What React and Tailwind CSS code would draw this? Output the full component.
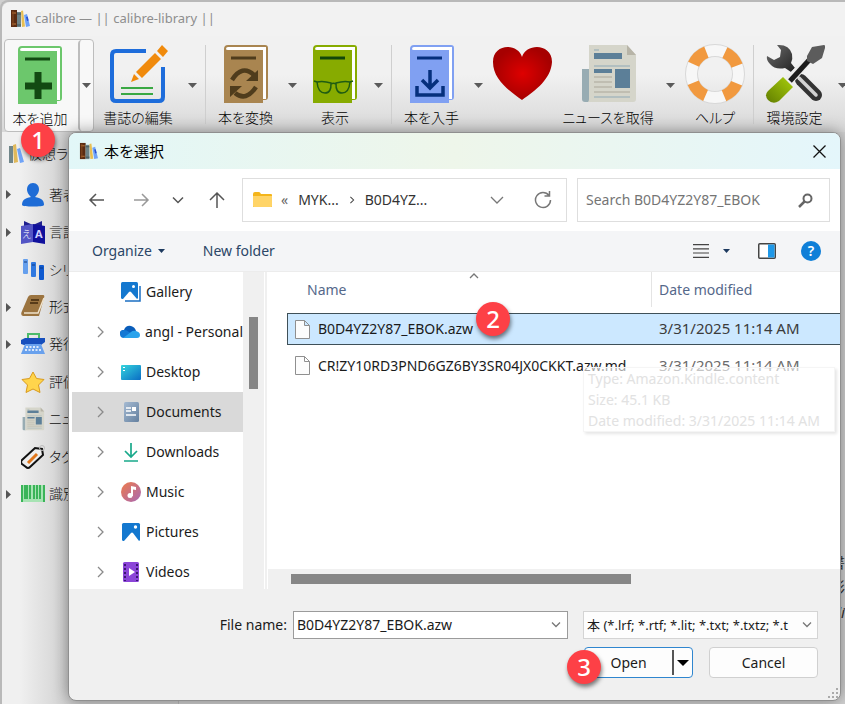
import React from 'react';

const BooksIcon = ({ className }) => (
    <svg viewBox="0 0 20 20" className={className}>
        <rect x="1" y="1" width="6" height="17" fill="#5b2c12" />
        <path d="M2 4h4M2 15h4" stroke="#c07a3a" strokeWidth="1" />
        <path d="M3 2v15" stroke="#8a4c22" strokeWidth="1" />
        <rect x="7" y="3" width="4" height="15" fill="#6d8387" />
        <path d="M7 5h4M7 16h4" stroke="#3f5357" strokeWidth="1" />
        <path d="M11 2l2-.5 2 16-3 .5z" fill="#e8bf52" />
        <path d="M14 6l3-1 3 12-4 1z" fill="#6fa3f7" />
        <path d="M16 8l1.600-.4 1 4-1.600.4z" fill="#2a4fd0" />
    </svg>
);

const Book = ({ color, dark, children }) => (
    <svg viewBox="0 0 60 60" className="size-[60px]">
        <path d="M8 5q0-4 4-4h37q3 0 3 3v49q0 3-3 3h-2v3H8z" fill={color} />
        <path d="M10 5q0-2 2-2h38v52h-3V6H12q-2 0-2-1z" fill="#fff" />
        <path d="M15 14h25" stroke={dark} strokeWidth="3" />
        {children}
    </svg>
);

const AddBook = () => (
    <Book color="#6cc76c" dark="#124a12">
        <path d="M28 27v27M15 41h27" stroke="#124a12" strokeWidth="7" strokeLinejoin="round" />
    </Book>
);

const EditIcon = () => (
    <svg viewBox="0 0 60 60" className="size-[60px]" fill="none">
        <path d="M38 7H8q-4 0-4 4v42q0 4 4 4h43q4 0 4-4V23" stroke="#1e6ddb" strokeWidth="4" />
        <path d="M13 44h32M13 50h32" stroke="#39a843" strokeWidth="2" />
        <path d="M23 38l3-8 5 5zM28 28L47 9l6 6-19 19zM49 7l5-6 6 6-5 6z" fill="#f08a0c" />
    </svg>
);

const ConvertIcon = () => (
    <Book color="#a98550" dark="#4f3c1c">
        <path d="M16 36q10-16 22-5M40 43q-10 15-21 6" stroke="#4f3c1c" strokeWidth="4.500" fill="none" />
        <path d="M42 26v11H30zM14 53V42h12z" fill="#4f3c1c" />
    </Book>
);

const ViewIcon = () => (
    <Book color="#87ab00" dark="#12460a">
        <path d="M12 38q6-1.500 14 1 .5 10-6 10-7 0-8-11zM31 39q8-2.500 14-1-1 11-8 11-6.500 0-6-10zM26 40q2.500-1.500 5 0M9 37l3 1M48 37l-3 1" stroke="#1f5c12" strokeWidth="1.500" fill="none" />
    </Book>
);

const FetchIcon = () => (
    <Book color="#80a0f2" dark="#052f7d">
        <path d="M28 26v17M20 36l8 8 8-8M15 42v9h26v-9" stroke="#052f7d" strokeWidth="3.500" fill="none" />
    </Book>
);

const HeartIcon = () => (
    <svg viewBox="0 0 60 60" className="size-[60px]">
        <defs>
            <radialGradient id="heart">
                <stop offset="0" stopColor="#de0000" />
                <stop offset="1" stopColor="#a60000" />
            </radialGradient>
        </defs>
        <path d="M30 56C16 46 1 35 1 18 1-1 26-1 30 13 34-1 60-1 60 18 59 35 44 46 30 56z" fill="url(#heart)" />
    </svg>
);

const NewsIcon = ({ className }) => (
    <svg viewBox="0 0 60 60" className={className}>
        <path d="M4 25h7v33H7q-3 0-3-3z" fill="#98acb3" />
        <path d="M11 1h38l9 10v44q0 3-3 3H10q1-1 1-3z" fill="#d5d5ca" />
        <path d="M49 1l9 10h-9z" fill="#b7b4a7" />
        <path d="M16 9h28v6H16zM16 25h18v4H16zM37 25h15v19H37z" fill="#5c7f98" />
        <path d="M16 6h5M16 22h36M16 53h36" stroke="#8fa9b6" strokeWidth="1" />
        <path d="M16 33h18M16 38h18M16 43h18M16 48h36" stroke="#b9b7aa" strokeWidth="1.500" />
    </svg>
);

const HelpIcon = () => (
    <svg viewBox="0 0 60 60" className="size-[60px]" fill="none">
        <circle cx="30" cy="30" r="23.500" stroke="#d8d8d8" strokeWidth="13" />
        <circle cx="30" cy="30" r="23.500" stroke="#f7f7f7" strokeWidth="11" />
        <circle cx="30" cy="30" r="23.500" stroke="#f1993f" strokeWidth="12" strokeDasharray="18 18.910" strokeDashoffset="-9.460" />
    </svg>
);

const ToolsIcon = () => (
    <svg viewBox="0 0 60 60" className="size-[60px]">
        <defs>
            <linearGradient id="steel" x1="0" y1="0" x2="1" y2="1">
                <stop offset="0" stopColor="#6d6d6d" />
                <stop offset="1" stopColor="#222" />
            </linearGradient>
            <linearGradient id="grip" x1="0" y1="1" x2="1" y2="0">
                <stop offset="0" stopColor="#617d00" />
                <stop offset="1" stopColor="#a9cf0c" />
            </linearGradient>
        </defs>
        <path d="M12 1q12-1 15 9 1 5-1 9l4 5-4 4-6-4q-10 2-15-4-4-4-3-8l7 4 6-3 1-7z" fill="url(#steel)" />
        <path d="M36 36l15 15" stroke="#333" strokeWidth="12" strokeLinecap="round" />
        <path d="M34 34l17 17" stroke="#d2d2d2" strokeWidth="3.500" strokeLinecap="round" />
        <path d="M20 41L45 14" stroke="#ededed" strokeWidth="9" />
        <path d="M25 37L46 14" stroke="#1b1b1b" strokeWidth="5" />
        <path d="M42 12l5-9 12-2q2 1 1 3l-3 10-9 6-6-3z" fill="#5c5c5c" />
        <path d="M18 33l10 10L14 57Q8 61 3 56-1 51 3 47z" fill="url(#grip)" />
    </svg>
);

const DropArrow = ({ className = 'w-5' }) => (
    <button type="button" aria-label="menu" className={`flex shrink-0 items-center justify-center ${className}`}>
        <svg viewBox="0 0 9 5" className="h-[5px] w-[9px]">
            <path d="M0 0h9L4.500 5z" fill="#5a5a5a" />
        </svg>
    </button>
);

const ToolButton = ({ label, width, children }) => (
    <button type="button" className={`flex shrink-0 flex-col items-center pt-[5px] ${width}`}>
        {children}
        <span className="mt-1 h-5 text-sm leading-5 whitespace-nowrap">{label}</span>
    </button>
);

const Separator = () => <div className="mx-[3px] mt-1.5 mb-2 w-px shrink-0 bg-[#cfcfcf]" />;

const Toolbar = () => (
    <nav className="flex h-24 overflow-hidden bg-linear-to-b from-[#f1f1f1] from-40% to-[#d8d8d8] pt-[3px] pl-0.5 font-light text-black [font-feature-settings:'palt']">
        <div className="flex shrink-0 rounded border border-[#bdbdbd] bg-[#f8f8f8]">
            <ToolButton label="本を追加" width="w-[73px] pr-[3px]"><AddBook /></ToolButton>
            <DropArrow className="w-[15px] rounded border-l-2 border-[#bdbdbd]" />
        </div>
        <ToolButton label="書誌の編集" width="w-[88px]"><EditIcon /></ToolButton>
        <DropArrow />
        <Separator />
        <ToolButton label="本を変換" width="w-[73px]"><ConvertIcon /></ToolButton>
        <DropArrow />
        <ToolButton label="表示" width="w-[66px]"><ViewIcon /></ToolButton>
        <DropArrow />
        <Separator />
        <ToolButton label="本を入手" width="w-[73px]"><FetchIcon /></ToolButton>
        <DropArrow />
        <ToolButton label="" width="w-[68px]"><HeartIcon /></ToolButton>
        <ToolButton label="ニュースを取得" width="w-[104px]"><NewsIcon className="size-[60px]" /></ToolButton>
        <DropArrow />
        <ToolButton label="ヘルプ" width="w-[70px]"><HelpIcon /></ToolButton>
        <Separator />
        <ToolButton label="環境設定" width="w-[75px]"><ToolsIcon /></ToolButton>
        <DropArrow />
    </nav>
);

const categories = [
    {
        label: '著者', open: true,
        icon: <path d="M12 0c4 0 6 3 6 6.500S15 13 14 14c6 1 9 3 9 8 0 2-22 2-22 0 0-5 3-7 9-8-1-1-4-4-4-7.500S8 0 12 0z" fill="#1e6cd6" />,
    },
    {
        label: '言語', open: true,
        icon: (
            <>
                <path d="M3 1l9 4 9-4v20l-9-4-9 4z" fill="#20208f" />
                <path d="M0 6l12-2v18L0 24z" fill="#5355c5" />
                <path d="M12 4l12 2v18l-12-2z" fill="#10109c" />
                <text x="1" y="18" fontSize="10" fill="#fff">え</text>
                <text x="14" y="18" fontSize="11" fontWeight="700" fill="#cfd2ff">A</text>
            </>
        ),
    },
    {
        label: 'シリーズ',
        icon: (
            <>
                <rect x="2" y="1" width="5" height="15" rx="1" fill="#659fed" />
                <rect x="10" y="4" width="5" height="15" rx="1" fill="#2f78e0" />
                <rect x="18" y="7" width="5" height="15" rx="1" fill="#0f5ad0" />
                <path d="M3 4h3M11 7h3M19 10h3" stroke="#123a80" strokeWidth="1" />
            </>
        ),
    },
    {
        label: '形式', open: true,
        icon: (
            <>
                <path d="M7 2q1-2 3-2h12q2 0 1 3l-5 18H2q-3-1-1-5z" fill="#9b7440" />
                <path d="M3 18h14l6-15" stroke="#efe2cb" strokeWidth="1.500" fill="none" />
                <path d="M10 5h8M9 8h8" stroke="#41290c" strokeWidth="1.500" />
            </>
        ),
    },
    {
        label: '発行者', open: true,
        icon: (
            <>
                <path d="M7 6V2h11v4" stroke="#4bbb6b" strokeWidth="2" fill="none" />
                <path d="M0 8l4-2h20v4l-4 3H3l-3-1z" fill="#174fbd" />
                <path d="M4 12h16l4 10H0z" fill="#69a1ed" />
                <path d="M5 15h14M4 18h16" stroke="#fff" strokeWidth="1.500" strokeDasharray="2 1.500" />
            </>
        ),
    },
    {
        label: '評価',
        icon: <path d="M12 2l3.500 6.500 7.500 1-5.500 5.500 1.500 7.500-7-3.500-7 3.500L6.500 15 1 9.500l7.500-1z" fill="#ffd54c" stroke="#d99a1c" strokeWidth="1" strokeLinejoin="round" />,
    },
    { label: 'ニュース', news: true },
    {
        label: 'タグ',
        icon: (
            <>
                <path d="M1 15L14 3l7 1 1 6L9 22q-2 2-4 0l-4-3q-2-2 0-4z" fill="#eee" stroke="#111" strokeWidth="2" />
                <path d="M7 18L16 9" stroke="#e0761b" strokeWidth="3" />
                <circle cx="21" cy="3" r="2.500" stroke="#bbb" strokeWidth="1" fill="none" />
            </>
        ),
    },
    {
        label: '識別子', open: true,
        icon: (
            <>
                <path d="M0 3h24v17H0z" fill="#a7e3b3" />
                <path d="M1 3v17M4 3v14M6 3v14M9 3v14M13 3v14M16 3v14M19 3v14M23 3v17" stroke="#17a53b" strokeWidth="1.500" />
            </>
        ),
    },
];

const Sidebar = () => (
    <aside className="w-44 shrink-0 bg-linear-to-r from-[#f0f0f0] from-10% to-[#cecece] to-40% text-sm font-light text-[#101010] [font-feature-settings:'palt']">
        <div className="flex h-11 items-center gap-1 pl-1.5 whitespace-nowrap">
            <svg viewBox="0 0 16 20" className="h-5 w-4">
                <path d="M1 2h4v17H1z" fill="#71868a" />
                <path d="M5 1l3-1 2 18-4 1z" fill="#e0b85a" />
                <path d="M9 5l3-1 4 14-4 1z" fill="#6fa3f7" />
            </svg>
            仮想ライブラリ
        </div>
        <ul className="flex h-[337px] flex-col">
            {categories.map((c) => (
                <li key={c.label} className="flex flex-1 items-center whitespace-nowrap">
                    <span className="flex w-[19px] pl-1">
                        {c.open && (
                            <svg viewBox="0 0 5 9" className="h-[9px] w-[5px]"><path d="M0 0l5 4.500L0 9z" fill="#555" /></svg>
                        )}
                    </span>
                    {c.news ? <NewsIcon className="size-6" /> : <svg viewBox="0 0 24 24" className="size-6">{c.icon}</svg>}
                    <span className="pl-1">{c.label}</span>
                </li>
            ))}
        </ul>
    </aside>
);

const Chevron = ({ d = 'M1 1l6 6 6-6', box = '0 0 14 8', className = 'h-2 w-3.5', color = '#777' }) => (
    <svg viewBox={box} className={className} fill="none" stroke={color} strokeWidth="1.300">
        <path d={d} />
    </svg>
);

const NavArrow = ({ d, label, className, color = '#555' }) => (
    <button type="button" aria-label={label} className={`flex size-5 items-center justify-center ${className}`}>
        <svg viewBox="0 0 16 16" className="size-4 overflow-visible" fill="none" stroke={color} strokeWidth="1.500">
            <path d={d} />
        </svg>
    </button>
);

const AddressBar = () => (
    <div className="flex h-[62px] items-center bg-white pr-2.5 pl-[18px] text-[#333]">
        <NavArrow label="Back" d="M15 8H1M7 2L1 8l6 6" />
        <NavArrow label="Forward" className="ml-6" color="#999" d="M1 8h14M9 2l6 6-6 6" />
        <NavArrow label="Recent" className="ml-[17px]" d="M3 5.500l5 5 5-5" />
        <NavArrow label="Up" className="ml-[19px]" d="M8 16V1M1 8l7-7 7 7" />
        <div className="ml-[15px] flex h-11 min-w-0 flex-1 items-center border border-[#dedede] pl-2.5 text-sm">
            <svg viewBox="0 0 20 16" className="h-4 w-5">
                <path d="M0 2q0-2 2-2h4q1 0 2 2h10q1 0 1 1v12H0z" fill="#f4b51b" />
                <path d="M0 4h19v10q0 1-1 1H1q-1 0-1-1z" fill="#ffd467" />
            </svg>
            <span className="ml-2 text-[#666]">«</span>
            <a href="#" className="ml-2.5">MYK...</a>
            <Chevron box="0 0 6 10" d="M1 1l4 4-4 4" className="mx-2.5 h-2 w-1.5" color="#444" />
            <a href="#">B0D4YZ...</a>
            <button type="button" aria-label="Previous locations" className="mr-[30px] ml-auto"><Chevron /></button>
            <button type="button" aria-label="Refresh" className="mr-3.5">
                <svg viewBox="0 0 18 18" className="size-[18px]" fill="none" stroke="#777" strokeWidth="1.500">
                    <path d="M15 4.500A7.500 7.500 0 1 0 16.500 9M15.500 0v5h-5" />
                </svg>
            </button>
        </div>
        <div className="ml-2.5 flex h-11 w-[253px] items-center border border-[#dedede] pr-4 pl-2">
            <input type="search" aria-label="Search" placeholder="Search B0D4YZ2Y87_EBOK" className="min-w-0 flex-1 text-sm placeholder-[#757575] outline-none" />
            <svg viewBox="0 0 15 15" className="size-[15px]" fill="none" stroke="#666">
                <circle cx="9.500" cy="5.500" r="4" strokeWidth="2" />
                <path d="M6.500 8.500L1 14" strokeWidth="2.500" />
            </svg>
        </div>
    </div>
);

const CommandBar = () => (
    <div className="flex h-[41px] items-center border-b border-[#ececec] bg-[#f4f5f7] pr-[19px] pl-[23px] text-sm text-[#2b4667]">
        <button type="button" className="flex items-center gap-1.5">
            Organize
            <svg viewBox="0 0 7 4" className="h-1 w-[7px]"><path d="M0 0h7L3.500 4z" fill="#1d3a5f" /></svg>
        </button>
        <button type="button" className="ml-[38px]">New folder</button>
        <button type="button" aria-label="Change view" className="ml-auto flex items-center gap-3.5">
            <svg viewBox="0 0 16 14" className="h-3.5 w-4" stroke="#444" strokeWidth="1.200">
                <path d="M0 .6h16M0 4.800h16M0 9h16M0 13.300h16" />
            </svg>
            <svg viewBox="0 0 7 4" className="h-1 w-[7px]"><path d="M0 0h7L3.500 4z" fill="#1d3a5f" /></svg>
        </button>
        <button type="button" aria-label="Preview pane" className="ml-7">
            <svg viewBox="0 0 18 16" className="h-4 w-[18px]">
                <rect x=".75" y=".75" width="16.500" height="14.500" rx="1" fill="#fff" stroke="#444" strokeWidth="1.500" />
                <path d="M10 1.500h6.500v13H10z" fill="#1f98e8" />
            </svg>
        </button>
        <button type="button" aria-label="Help" className="ml-[25px] flex size-5 items-center justify-center rounded-full bg-[#0f7fd8] text-sm font-semibold text-white">?</button>
    </div>
);

const PictureShape = () => (
    <>
        <rect x="1" y="1" width="18" height="18" rx="1.500" fill="#1478cf" />
        <path d="M3 19l7-8q1-1 2 0l6 8z" fill="#fff" />
        <circle cx="14.500" cy="5" r="1.700" fill="#fff" />
    </>
);

const places = [
    {
        name: 'Gallery', root: true,
        icon: (
            <>
                <path d="M19 4v15H4" stroke="#1b6fc2" strokeWidth="1.500" fill="none" />
                <rect x="0" y="0" width="17" height="17" rx="1.500" fill="#1478cf" />
                <path d="M2 17l6-7q1-1 2 0l6 7z" fill="#fff" />
                <circle cx="12.500" cy="4.500" r="1.500" fill="#fff" />
            </>
        ),
    },
    {
        name: 'angl - Personal',
        icon: (
            <>
                <path d="M4 8q2-5 7-4 4 1 5 5l-6 5H4Q0 14 0 11q0-3 4-3z" fill="#0a5dba" />
                <path d="M0 12q0-4 4-4 3 0 5 2l3 2-8 4Q0 16 0 12z" fill="#1478d4" />
                <path d="M3 16l8-6q2-2 5-1 4 1 4 4 0 3-3 3z" fill="#2ba3ec" />
            </>
        ),
    },
    {
        name: 'Desktop',
        icon: (
            <>
                <defs>
                    <linearGradient id="desk" x2="1" y2="1">
                        <stop offset="0" stopColor="#35d5dd" />
                        <stop offset="1" stopColor="#0a6cc4" />
                    </linearGradient>
                </defs>
                <rect x="0" y="3" width="20" height="15" rx="1" fill="url(#desk)" />
                <path d="M2 5h2v1H2zM2 8h2v1H2z" fill="#fff" />
            </>
        ),
    },
    {
        name: 'Documents', selected: true,
        icon: (
            <>
                <defs>
                    <linearGradient id="docs" x2="1" y2="1">
                        <stop offset="0" stopColor="#a5bad2" />
                        <stop offset="1" stopColor="#64809f" />
                    </linearGradient>
                </defs>
                <rect x="3" y="0" width="15" height="20" rx="1.500" fill="url(#docs)" />
                <path d="M5 6h5M5 9h5M5 13h10" stroke="#fff" strokeWidth="1.500" />
                <rect x="11" y="5" width="4" height="4" fill="#fff" />
            </>
        ),
    },
    {
        name: 'Downloads',
        icon: <path d="M10 1v14M4 9l6 6 6-6M3 19h14" stroke="#19a98b" strokeWidth="1.700" fill="none" />,
    },
    {
        name: 'Music',
        icon: (
            <>
                <defs>
                    <linearGradient id="music" x2="1" y2="1">
                        <stop offset="0" stopColor="#ee7b4b" />
                        <stop offset="1" stopColor="#a868b4" />
                    </linearGradient>
                </defs>
                <circle cx="10" cy="10" r="10" fill="url(#music)" />
                <path d="M10 4l5 1v3l-3-.5V14h-2z" fill="#fff" />
                <circle cx="9" cy="13.500" r="2.500" fill="#fff" />
            </>
        ),
    },
    { name: 'Pictures', icon: <PictureShape /> },
    {
        name: 'Videos',
        icon: (
            <>
                <rect x="2" y="0" width="16" height="20" rx="1.500" fill="#8b45d8" />
                <path d="M4 2v17M16 2v17" stroke="#3c1673" strokeWidth="2" strokeDasharray="2 2" />
                <path d="M8 6l6 4-6 4z" fill="#fff" />
            </>
        ),
    },
];

const PlacesTree = () => (
    <ul className="w-[174px] shrink-0 bg-white text-sm text-[#1b1b1b]">
        {places.map((p) => (
            <li key={p.name} className={`ml-[3px] flex h-10 items-center whitespace-nowrap ${p.selected ? 'bg-[#d9d9d9]' : ''}`}>
                <span className="ml-[25px] flex w-6">
                    {!p.root && <Chevron box="0 0 7 12" d="M1 1l5 5-5 5" className="h-3 w-[7px]" color="#8a8a8a" />}
                </span>
                <svg viewBox="0 0 20 20" className="size-5 shrink-0">{p.icon}</svg>
                <a href="#" className="pl-[5px]">{p.name}</a>
            </li>
        ))}
    </ul>
);

const Badge = ({ n, className }) => (
    <span className={`absolute z-20 flex size-[34px] items-center justify-center rounded-full bg-[#fd4046] text-2xl leading-none font-medium text-white shadow-[1px_3px_4px_rgba(0,0,0,0.5)] ${className}`}>
        {n}
    </span>
);

const PageIcon = () => (
    <svg viewBox="0 0 15 19" className="h-[19px] w-[15px] shrink-0">
        <path d="M.5.5h9l5 5v13H.5zM9.500.5v5h5" fill="#fcfcfc" stroke="#8f8f8f" />
    </svg>
);

const FileList = () => (
    <div className="relative flex min-w-0 flex-1 flex-col bg-white">
        <div className="flex-1 pl-[19px]">
            <table className="w-full table-fixed border-separate border-spacing-0 text-left">
                <thead>
                    <tr className="h-[41px] align-top text-sm text-[#55688a]">
                        <th className="relative p-0 font-normal">
                            <div className="flex h-[35px] items-center pl-5">Name</div>
                            <Chevron box="0 0 10 6" d="M1 5l4-4 4 4" className="absolute top-px left-1/2 h-1.5 w-2.5" />
                        </th>
                        <th className="w-[189px] p-0 font-normal">
                            <div className="flex h-[35px] items-center border-l border-[#e4e4e4] pl-[7px]">Date modified</div>
                        </th>
                    </tr>
                </thead>
                <tbody className="text-sm text-[#1b1b1b]">
                    <tr className="h-8 bg-[#cce8ff]">
                        <td className="border-y border-l border-[#3f5058] p-0">
                            <div className="flex items-center pl-[7px]">
                                <PageIcon />
                                <span className="relative pl-2">
                                    B0D4YZ2Y87_EBOK.azw
                                    <Badge n="2" className="-top-[17px] left-full ml-[3px]" />
                                </span>
                            </div>
                        </td>
                        <td className="border-y border-[#3f5058] p-0 pl-2 text-[15px] text-[#3b3b3b]">3/31/2025 11:14 AM</td>
                    </tr>
                    <tr className="h-[41px]">
                        <td className="p-0">
                            <div className="flex items-center pl-2 whitespace-nowrap">
                                <PageIcon />
                                <span className="pl-2">CR!ZY10RD3PND6GZ6BY3SR04JX0CKKT.azw.md</span>
                            </div>
                        </td>
                        <td className="p-0 pl-2 text-[15px] text-[#6b6b6b]">3/31/2025 11:14 AM</td>
                    </tr>
                </tbody>
            </table>
        </div>
        <div className="h-5 bg-[#f0f0f0] pt-[5px] pl-[23px]">
            <div className="h-2.5 w-[62%] bg-[#868686]" />
        </div>
        <div role="tooltip" className="absolute top-[95px] right-[5px] w-[252px] border border-[#f5f5f5] bg-white/60 px-1 text-sm leading-[21px] whitespace-nowrap text-[#e2e2e2] shadow-[2px_2px_3px_rgba(0,0,0,0.1)]">
            <p>Type: Amazon.Kindle.content</p>
            <p>Size: 45.1 KB</p>
            <p>Date modified: 3/31/2025 11:14 AM</p>
        </div>
    </div>
);

const DialogFooter = () => (
    <div className="relative flex h-[111px] flex-col gap-2 pt-[22px] pr-[22px] text-sm text-[#1b1b1b]">
        <div className="flex items-center justify-end">
            <label htmlFor="filename" className="mr-1.5">File name:</label>
            <div className="flex h-7 w-[275px] items-center border border-[#9b9b9b] bg-white pr-1.5 pl-[3px]">
                <input id="filename" type="text" defaultValue="B0D4YZ2Y87_EBOK.azw" className="min-w-0 flex-1 outline-none" />
                <Chevron box="0 0 10 6" d="M1 .5l4 4 4-4" className="h-1.5 w-2.5" />
            </div>
            <div className="relative ml-[15px] h-7 w-[235px]">
                <select aria-label="File type" className="h-full w-full appearance-none border border-[#d4d4d4] bg-[#fdfdfd] pr-5 pl-[3px] text-[13px]">
                    <option>本 (*.lrf; *.rtf; *.lit; *.txt; *.txtz; *.t</option>
                </select>
                <Chevron box="0 0 10 6" d="M1 .5l4 4 4-4" className="pointer-events-none absolute top-[11px] right-1.5 h-1.5 w-2.5" />
            </div>
        </div>
        <div className="flex justify-end gap-4">
            <div className="relative flex h-[31px] w-[109px] rounded border border-[#2f86cf] bg-[#fdfdfd] py-0.5">
                <button type="button" className="flex-1">Open</button>
                <button type="button" aria-label="Open options" className="flex w-5 items-center justify-center border-l-2 border-[#555]">
                    <svg viewBox="0 0 12 6" className="h-1.5 w-3"><path d="M0 0h12L6 6z" fill="#000" /></svg>
                </button>
                <Badge n="3" className="top-0.5 -left-[18px]" />
            </div>
            <button type="button" className="h-[31px] w-[109px] rounded border border-[#d0d0d0] bg-[#fdfdfd]">Cancel</button>
        </div>
        <svg viewBox="0 0 10 10" className="absolute right-0.5 bottom-0.5 size-2.5" fill="#aaa">
            <path d="M8 0h2v2H8zM4 4h2v2H4zM8 4h2v2H8zM0 8h2v2H0zM4 8h2v2H4zM8 8h2v2H8z" />
        </svg>
    </div>
);

const FileDialog = () => (
    <section role="dialog" aria-label="本を選択" className="absolute top-[132px] right-1 left-[68px] z-10 overflow-hidden rounded-lg border border-[#8f8f8f] bg-[#f0f0f0] shadow-[0_0_16px_rgba(0,0,0,0.4)]">
        <header className="flex h-9 items-center bg-linear-to-r from-[#e2f7f8] via-[#eef6ea] to-[#e4f6fb] pr-3.5 pl-2.5">
            <BooksIcon className="size-[19px]" />
            <h2 className="ml-1.5 text-[15px] leading-5 text-black">本を選択</h2>
            <button type="button" aria-label="Close" className="ml-auto">
                <Chevron box="0 0 13 13" d="M.5.5l12 12M12.500.5l-12 12" className="size-[13px]" color="#111" />
            </button>
        </header>
        <AddressBar />
        <CommandBar />
        <div className="flex h-[317px]">
            <PlacesTree />
            <div className="w-[21px] shrink-0 bg-[#f0f0f0] pt-[45px] pl-1.5">
                <div className="h-[72px] w-[9px] bg-[#868686]" />
            </div>
            <div className="w-1 shrink-0 border-x border-white bg-[#f0f0f0]" />
            <FileList />
        </div>
        <DialogFooter />
    </section>
);

const App = () => (
    <div className="relative min-h-screen overflow-hidden bg-[#d0d0d0] font-['Noto_Sans','Noto_Sans_CJK_JP',sans-serif]">
        <div className="flex min-h-screen flex-col rounded-tl-lg border-t-2 border-l-2 border-[#b9b9b9] bg-[#d2d2d2]">
            <header className="flex h-[34px] items-center rounded-tl-lg bg-[#f2f2f2] pl-2">
                <BooksIcon className="size-5" />
                <h1 className="ml-[5px] text-[13px] text-[#8e8e8e]">calibre — || calibre-library ||</h1>
            </header>
            <Toolbar />
            <main className="flex flex-1">
                <Sidebar />
                <div className="flex-1 border-l border-[#bbb] pt-[418px] text-right text-[15px] leading-[25px] text-[#333]">
                    <p>書</p>
                    <p>形</p>
                    <p className="italic">li</p>
                </div>
            </main>
        </div>
        <FileDialog />
        <Badge n="1" className="top-[123px] left-[21px]" />
    </div>
);

export default App;
